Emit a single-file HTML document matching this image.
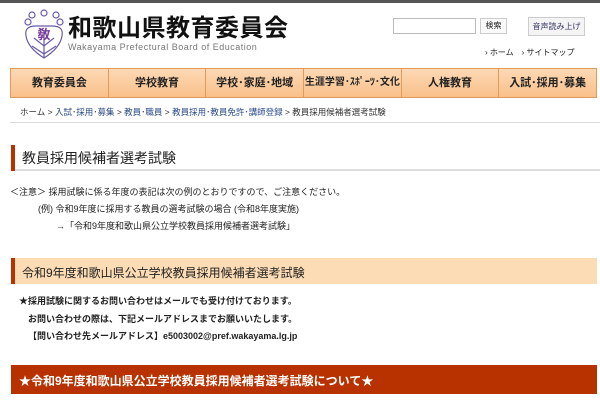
<!DOCTYPE html>
<html><head><meta charset="utf-8"><style>
body{margin:0;width:600px;height:400px;overflow:hidden;background:#fff;font-family:"Liberation Sans","Noto Sans CJK JP",sans-serif;color:#222;position:relative}
.a{position:absolute;white-space:nowrap}
.nav{position:absolute;left:10px;top:68px;width:587px;height:30px;display:flex;border:1px solid #e09a5c;box-sizing:border-box}
.nav div{flex:1;background:linear-gradient(#fdd9b5,#f9c08a);border-right:1px solid #e09a5c;font-size:11px;font-weight:bold;text-align:center;line-height:28px;color:#222;white-space:nowrap;overflow:hidden}
.nav div:last-child{border-right:none}
</style></head><body>
<div class="a" style="left:0;top:0;width:600px;height:3px;background:#555"></div>
<svg class="a" style="left:22px;top:8px" width="44" height="52" viewBox="0 0 44 52">
<g fill="none" stroke="#6a5aa8" stroke-width="1.2">
<circle cx="10" cy="7" r="3"/><circle cx="22" cy="5" r="3"/><circle cx="34" cy="7" r="3"/>
<circle cx="6" cy="14" r="3"/><circle cx="38" cy="14" r="3"/>
<path d="M4 28 Q2 18 14 18 L30 18 Q42 18 40 28 Q38 40 22 50 Q6 40 4 28Z"/>
<path d="M22 22 L22 50 M12 30 L22 38 L32 30 M10 38 L22 46 L34 38"/>
</g>
<text x="22" y="31" text-anchor="middle" font-size="13" font-weight="bold" fill="#7a3aa0" font-family="Noto Sans CJK JP">敎</text>
</svg>
<div class="a" style="left:68px;top:8px;font-size:24px;font-weight:bold;color:#111;letter-spacing:0.5px">和歌山県教育委員会</div>
<div class="a" style="left:68px;top:42px;font-size:9px;color:#777;letter-spacing:0.5px">Wakayama Prefectural Board of Education</div>
<div class="a" style="left:393px;top:18px;width:83px;height:16px;border:1px solid #bbb;box-sizing:border-box"></div>
<div class="a" style="left:480px;top:18px;width:27px;height:16px;border:1px solid #ccc;box-sizing:border-box;font-size:8px;text-align:center;line-height:14px;background:#fafafa">検索</div>
<div class="a" style="left:528px;top:17px;width:57px;height:19px;border:1px solid #ccc;box-sizing:border-box;font-size:8px;text-align:center;line-height:17px;color:#336;background:#f4f4f4">音声読み上げ</div>
<div class="a" style="left:485px;top:47px;font-size:8px">› ホーム　› サイトマップ</div>
<div class="nav"><div>教育委員会</div><div>学校教育</div><div>学校･家庭･地域</div><div style="font-size:10px">生涯学習･ｽﾎﾟｰﾂ･文化</div><div>人権教育</div><div>入試･採用･募集</div></div>
<div class="a" style="left:20px;top:106px;font-size:8.5px;color:#333">ホーム &gt; <span style="color:#2a4a8a">入試･採用･募集</span> &gt; <span style="color:#2a4a8a">教員･職員</span> &gt; <span style="color:#2a4a8a">教員採用･教員免許･講師登録</span> &gt; 教員採用候補者選考試験</div>
<div class="a" style="left:10px;top:122px;width:590px;height:1px;background:#ddd"></div>
<div class="a" style="left:11px;top:145px;width:4px;height:26px;background:#b83200"></div>
<div class="a" style="left:15px;top:169px;width:585px;height:2px;background:#ddd"></div>
<div class="a" style="left:22px;top:148px;font-size:14px">教員採用候補者選考試験</div>
<div class="a" style="left:10px;top:185px;font-size:9px">＜注意＞ 採用試験に係る年度の表記は次の例のとおりですので、ご注意ください。</div>
<div class="a" style="left:38px;top:202px;font-size:9px">(例) 令和9年度に採用する教員の選考試験の場合 (令和8年度実施)</div>
<div class="a" style="left:56px;top:219px;font-size:9px">→「令和9年度和歌山県公立学校教員採用候補者選考試験」</div>
<div class="a" style="left:11px;top:258px;width:586px;height:26px;background:#fcdcb4;border-left:4px solid #b83200;box-sizing:border-box"></div>
<div class="a" style="left:22px;top:264px;font-size:12px">令和9年度和歌山県公立学校教員採用候補者選考試験</div>
<div class="a" style="left:19px;top:294px;font-size:9px;font-weight:bold">★採用試験に関するお問い合わせはメールでも受け付けております。</div>
<div class="a" style="left:28px;top:312px;font-size:9px;font-weight:bold">お問い合わせの際は、下記メールアドレスまでお願いいたします。</div>
<div class="a" style="left:28px;top:329px;font-size:9px;font-weight:bold">【問い合わせ先メールアドレス】e5003002@pref.wakayama.lg.jp</div>
<div class="a" style="left:11px;top:365px;width:586px;height:29px;background:#b83200"></div>
<div class="a" style="left:19px;top:372px;font-size:12px;font-weight:bold;color:#fff">★令和9年度和歌山県公立学校教員採用候補者選考試験について★</div>
</body></html>
